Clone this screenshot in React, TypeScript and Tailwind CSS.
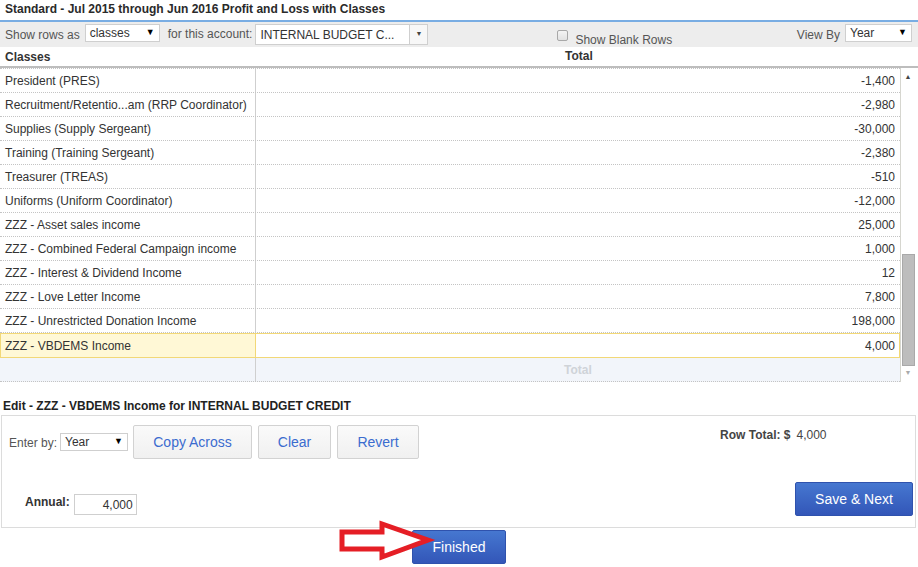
import React from 'react';

const rows: [string, string][] = [
  ['President (PRES)', '-1,400'],
  ['Recruitment/Retentio...am (RRP Coordinator)', '-2,980'],
  ['Supplies (Supply Sergeant)', '-30,000'],
  ['Training (Training Sergeant)', '-2,380'],
  ['Treasurer (TREAS)', '-510'],
  ['Uniforms (Uniform Coordinator)', '-12,000'],
  ['ZZZ - Asset sales income', '25,000'],
  ['ZZZ - Combined Federal Campaign income', '1,000'],
  ['ZZZ - Interest & Dividend Income', '12'],
  ['ZZZ - Love Letter Income', '7,800'],
  ['ZZZ - Unrestricted Donation Income', '198,000'],
];

function MiniSelect({ value, className }: { value: string; className: string }) {
  return (
    <div
      className={`flex items-center justify-between h-[18px] border border-[#cfcfcf] bg-white px-[4px] text-[12px] text-[#333] ${className}`}
    >
      <span>{value}</span>
      <span className="text-[9px] text-black">▼</span>
    </div>
  );
}

function GreyButton({ label, className }: { label: string; className: string }) {
  return (
    <div
      className={`flex items-center justify-center h-[34px] rounded-[2px] border border-[#d2d2d2] bg-gradient-to-b from-[#fafafa] to-[#f0f0f0] text-[14px] text-[#3b6ccf] ${className}`}
    >
      {label}
    </div>
  );
}

function BlueButton({ label, className }: { label: string; className: string }) {
  return (
    <div
      className={`flex items-center justify-center rounded-[2px] border border-[#2f52ad] bg-gradient-to-b from-[#4677d0] to-[#3356b8] text-[14px] text-white ${className}`}
    >
      {label}
    </div>
  );
}

export default function App() {
  return (
    <div className="relative w-[918px] h-[567px] overflow-hidden bg-white text-[12px] text-[#333] font-['Liberation_Sans',Arial,sans-serif]">
      {/* Report title */}
      <div className="h-[20px] pl-[5px] pt-[1px] leading-[17px] font-bold text-[#2a2a2a]">
        Standard - Jul 2015 through Jun 2016 Profit and Loss with Classes
      </div>
      <div className="h-[2px] bg-[#79ade3]" />

      {/* Toolbar */}
      <div className="flex h-[25px] bg-[#ededed] pt-[2px] pl-[5px] pr-[6px]">
        <span className="mt-[2px] text-[#555]">Show rows as</span>
        <MiniSelect value="classes" className="ml-[5px] w-[75px]" />
        <span className="ml-[8px] mt-[1px] text-[#555]">for this account:</span>
        <div className="ml-[3px] flex h-[21px]">
          <div className="flex w-[155px] items-center border border-[#cfcfcf] bg-white px-[4px] text-[12px]">
            INTERNAL BUDGET C...
          </div>
          <div className="flex w-[18px] items-center justify-center border border-l-0 border-[#cfcfcf] bg-[#f7f7f7] text-[7px] text-[#444]">
            ▼
          </div>
        </div>
        <div className="ml-[129px] mt-[6px] flex items-start">
          <div className="h-[11px] w-[11px] rounded-[2px] border border-[#a8a8a8] bg-gradient-to-b from-[#f4f4f4] to-[#e2e2e2]" />
          <span className="ml-[7px] mt-[1px] text-[#555]">Show Blank Rows</span>
        </div>
        <span className="ml-auto mt-[2px] text-[#555]">View By</span>
        <MiniSelect value="Year" className="ml-[5px] w-[67px]" />
      </div>

      {/* Table header */}
      <div className="relative flex h-[19px] items-center">
        <span className="pl-[5px] font-bold text-[#333]">Classes</span>
        <span className="absolute left-[565px] top-[0px] font-bold text-[#333]">Total</span>
      </div>
      <div className="h-[2px] bg-[#bdbdbd]" />

      {/* Table + scrollbar */}
      <div className="flex">
        <div className="w-[900px] border-t border-dotted border-[#c4c4c4]">
          {rows.map(([name, value]) => (
            <div key={name} className="flex h-[24px] border-b border-dotted border-[#c4c4c4]">
              <div className="flex w-[256px] items-center border-r border-solid border-r-[#cfcfcf] pl-[5px]">
                {name}
              </div>
              <div className="flex flex-1 items-center justify-end pr-[5px]">{value}</div>
            </div>
          ))}
          <div className="flex h-[25px] border border-[#f2d877] bg-[#fff8d6]">
            <div className="flex w-[255px] items-center border-r border-[#f2d877] pl-[4px]">
              ZZZ - VBDEMS Income
            </div>
            <div className="flex flex-1 items-center justify-end bg-white pr-[4px]">4,000</div>
          </div>
          <div className="flex h-[24px] border-b border-dotted border-[#c4c4c4] bg-[#f2f5fa]">
            <div className="w-[256px] border-r border-[#cfcfcf]" />
            <div className="flex flex-1 items-center">
              <span className="ml-[308px] font-bold text-[#cfd3d8]">Total</span>
            </div>
          </div>
        </div>
        <div className="flex w-[15px] flex-col items-center border-l border-[#d6d6cf] bg-white pt-[5px]">
          <span className="text-[7px] leading-[8px] text-[#444]">▲</span>
          <div className="mt-[173px] h-[112px] w-[13px] border border-[#a9a9a9] bg-[#bdbdbd]" />
          <span className="mt-[3px] text-[7px] leading-[8px] text-[#aaa]">▼</span>
        </div>
      </div>

      {/* Edit section */}
      <div className="mt-[17px] pl-[3px] font-bold leading-[14px] text-[#222]">
        Edit - ZZZ - VBDEMS Income for INTERNAL BUDGET CREDIT
      </div>
      <div className="ml-[1px] mt-[2px] h-[113px] w-[915px] border border-[#dcdcdc] px-[7px] pt-[9px]">
        <div className="flex items-start">
          <span className="mt-[9px] text-[#555]">Enter by:</span>
          <MiniSelect value="Year" className="ml-[3px] mt-[8px] w-[68px]" />
          <GreyButton label="Copy Across" className="ml-[5px] w-[119px]" />
          <GreyButton label="Clear" className="ml-[6px] w-[73px]" />
          <GreyButton label="Revert" className="ml-[6px] w-[82px]" />
          <span className="ml-[301px] mt-[1px] font-bold text-[#444]">Row Total: $</span>
          <span className="ml-[6px] mt-[1px] text-[#444]">4,000</span>
        </div>
        <div className="mt-[23px] flex items-end">
          <span className="ml-[16px] mb-[5px] font-bold text-[#333]">Annual:</span>
          <div className="ml-[4px] mb-[1px] flex h-[21px] w-[63px] items-center justify-end border border-[#cfcfcf] bg-white pr-[3px] text-[12px]">
            4,000
          </div>
          <BlueButton label="Save & Next" className="ml-auto mr-[-5px] h-[34px] w-[118px]" />
        </div>
      </div>

      {/* Finished */}
      <div className="mt-[2px] flex justify-center">
        <BlueButton label="Finished" className="h-[34px] w-[94px]" />
      </div>

      {/* Annotation arrow */}
      <svg className="absolute left-[336px] top-[519px]" width="100" height="44" viewBox="0 0 100 44">
        <polygon
          points="6,13 46,13 46,5 92,21 46,38 46,30 6,30"
          fill="white"
          stroke="#e51e25"
          strokeWidth="5"
          strokeLinejoin="miter"
        />
      </svg>
    </div>
  );
}
